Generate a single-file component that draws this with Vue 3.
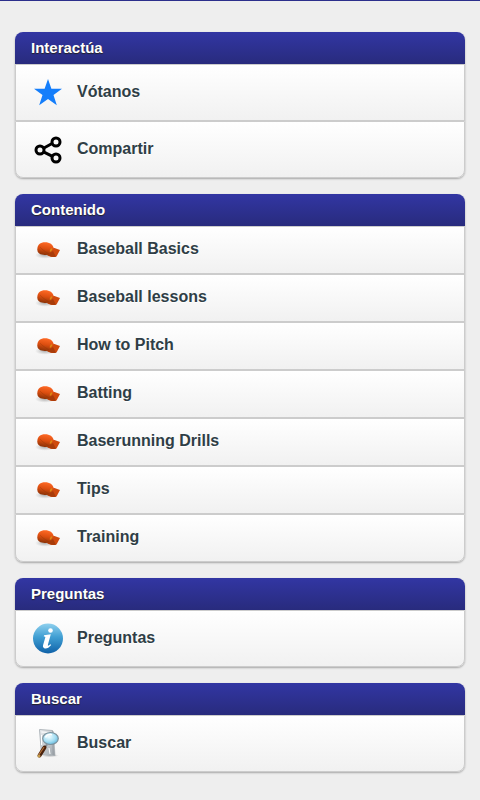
<script setup>
const groups = [
  {
    title: "Interactúa",
    items: [
      { label: "Vótanos", icon: "star" },
      { label: "Compartir", icon: "share" },
    ],
  },
  {
    title: "Contenido",
    compact: true,
    items: [
      { label: "Baseball Basics", icon: "cap" },
      { label: "Baseball lessons", icon: "cap" },
      { label: "How to Pitch", icon: "cap" },
      { label: "Batting", icon: "cap" },
      { label: "Baserunning Drills", icon: "cap" },
      { label: "Tips", icon: "cap" },
      { label: "Training", icon: "cap" },
    ],
  },
  { title: "Preguntas", items: [{ label: "Preguntas", icon: "info" }] },
  { title: "Buscar", items: [{ label: "Buscar", icon: "search" }] },
];
</script>

<template>
  <svg class="defs" width="0" height="0" aria-hidden="true">
    <defs>
      <linearGradient id="capFill" x1="0.6" y1="0" x2="0.4" y2="1">
        <stop offset="0" stop-color="#ff6a26" />
        <stop offset="0.5" stop-color="#dc4e10" />
        <stop offset="1" stop-color="#8a3207" />
      </linearGradient>
      <radialGradient id="capShade">
        <stop offset="0" stop-color="#777" stop-opacity="0.6" />
        <stop offset="1" stop-color="#999" stop-opacity="0" />
      </radialGradient>
      <linearGradient id="infoFill" x1="0" y1="0" x2="0" y2="1">
        <stop offset="0" stop-color="#8fd0ee" />
        <stop offset="0.45" stop-color="#409fd3" />
        <stop offset="1" stop-color="#0f61a8" />
      </linearGradient>
      <linearGradient id="paperFill" x1="0" y1="0" x2="1" y2="1">
        <stop offset="0" stop-color="#eceff1" />
        <stop offset="1" stop-color="#a0a7ad" />
      </linearGradient>
      <radialGradient id="glassFill" cx="0.4" cy="0.35" r="0.7">
        <stop offset="0" stop-color="#f2fdff" />
        <stop offset="0.6" stop-color="#a4def3" />
        <stop offset="1" stop-color="#5fb4da" />
      </radialGradient>
    </defs>
  </svg>

  <main class="page">
    <section v-for="group in groups" :key="group.title" class="group">
      <h2 class="divider">{{ group.title }}</h2>
      <ul class="list" :class="{ compact: group.compact }">
        <li v-for="item in group.items" :key="item.label">
          <a href="#" class="row">
            <svg class="icon" viewBox="0 0 32 32" aria-hidden="true">
              <path
                v-if="item.icon === 'star'"
                fill="#147efb"
                d="M16 3l3.4 9.7H30l-8.500 6.200 3.300 10.300L16 23l-8.800 6.200 3.300-10.300L2 12.700h10.600z"
              />
              <g v-else-if="item.icon === 'share'" fill="none" stroke="#000" stroke-width="3">
                <path d="M11.500 15.200l9-5M11.500 18.800l9 4.500" />
                <circle cx="8" cy="17" r="4" />
                <circle cx="24" cy="9" r="4" />
                <circle cx="24" cy="25" r="4" />
              </g>
              <g v-else-if="item.icon === 'cap'">
                <ellipse cx="13" cy="21" rx="10" ry="3.800" fill="url(#capShade)" />
                <path fill="#cf4a0d" d="M17 13.500l5.500.6 5.500 1.900-3.500 6.500c-3 1.200-6.500.5-9.500-1.500z" />
                <path fill="#a83c0a" d="M16 20l5-3 3 5.800c-3 .4-6-.2-8.500-1.800z" />
                <path fill="url(#capFill)" d="M5.300 15.500C5.300 10.800 8.500 8.300 13 8.300c4.800 0 8 2.200 8.700 6l-2 4-4 2.400C9.500 21.500 5.300 20 5.300 15.500z" />
                <path fill="none" stroke="#7f3208" stroke-width="0.700" opacity="0.400" d="M8 13c2 2.500 5 4.500 8.500 6.500" />
                <path fill="#d98c14" d="M19 14.300l1.500.4-1.500 3-1.500-.5z" />
              </g>
              <g v-else-if="item.icon === 'info'">
                <circle cx="16" cy="16.500" r="15" fill="url(#infoFill)" />
                <circle cx="18.500" cy="8.500" r="2.300" fill="#fff" />
                <path fill="#fff" d="M12 13.300l6.800-1-2.900 10.500c-.3 1.200.6 1.200 2.500-.5l.8.700c-2.300 2.800-4.500 3.800-6.500 3.400-1.700-.4-2-1.700-1.600-3.300l2.200-7.500c.2-.8-.2-1-1.500-1.200z" />
              </g>
              <g v-else>
                <ellipse cx="18" cy="28.500" rx="9" ry="1.800" fill="url(#capShade)" />
                <path fill="url(#paperFill)" stroke="#b0b7bc" d="M7.500 2.500l13 1 2 25-13-1z" />
                <path fill="#8f969b" d="M20 3.500l2 1 1.500 24.500-3-1z" opacity="0.500" />
                <path fill="none" stroke="#fff" d="M9.500 5l8 .5M9.500 8v10M17 21l1 6" />
                <path stroke="#858b90" stroke-width="2" d="M15 17.500l-3.500 4.500" />
                <path stroke="#4a220c" stroke-width="4" stroke-linecap="round" d="M12.500 20.500L7.500 28.500" />
                <path stroke="#b7743d" stroke-width="1.200" stroke-linecap="round" d="M11.800 20.500L7 27.500" />
                <circle cx="7" cy="29" r="1.500" fill="#c29a4a" />
                <ellipse cx="18.500" cy="11.500" rx="7.800" ry="6" fill="url(#glassFill)" stroke="#7d929d" stroke-width="1.200" />
                <path fill="none" stroke="#fff" stroke-width="1.500" d="M13.500 10.500c1-2.500 3.500-3.300 6.500-2.800" />
              </g>
            </svg>
            <span>{{ item.label }}</span>
          </a>
        </li>
      </ul>
    </section>
  </main>
</template>

<style>
body {
  margin: 0;
  background: #eee;
}
</style>

<style scoped>
.defs {
  position: absolute;
}
.page {
  display: flex;
  flex-direction: column;
  gap: 16px;
  padding: 31px 15px 28px;
  border-top: 1px solid #2c2f8c;
  font-family: "Liberation Sans", Arial, Helvetica, sans-serif;
}
.group {
  border-radius: 8px;
  box-shadow: 0 1px 2px rgba(0, 0, 0, 0.3);
}
.divider {
  margin: 0;
  padding: 0 16px;
  border-radius: 8px 8px 0 0;
  background: linear-gradient(#3236a3, #282b7d);
  color: #fff;
  font-size: 15px;
  font-weight: bold;
  line-height: 32px;
  text-shadow: 0 1px 1px #222;
}
.list {
  margin: 0;
  padding: 0;
  list-style: none;
}
.row {
  display: flex;
  align-items: flex-start;
  gap: 13px;
  box-sizing: border-box;
  min-height: 57px;
  padding: 11px 16px;
  border: 1px solid #ccc;
  background: linear-gradient(#fff, #f1f1f1);
  color: #2f3e46;
  font-size: 16px;
  font-weight: bold;
  line-height: 32px;
  text-decoration: none;
  text-shadow: 0 1px 0 #fff;
}
.compact .row {
  min-height: 48px;
  padding: 7px 16px;
  line-height: 30px;
}
li:last-child .row {
  border-radius: 0 0 8px 8px;
}
.icon {
  flex: none;
  width: 32px;
  height: 32px;
}
</style>
